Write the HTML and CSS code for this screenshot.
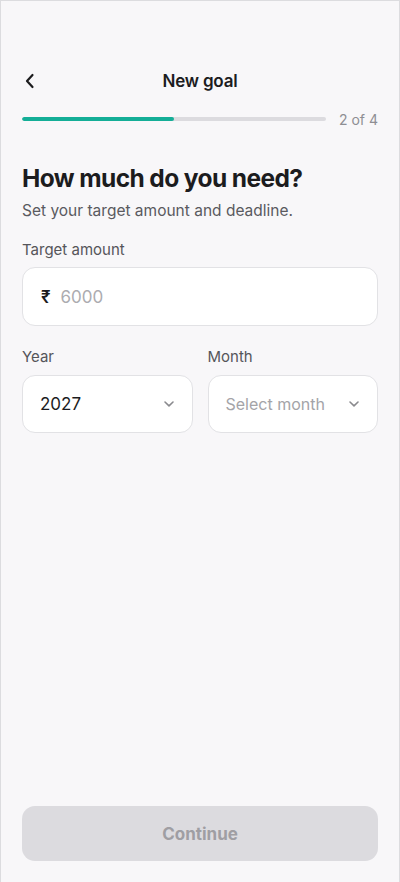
FILE: index.html
```html
<!DOCTYPE html>
<html lang="en">
<head>
<meta charset="utf-8">
<title>New goal</title>
<link rel="stylesheet" href="styles.css">
</head>
<body>
<div class="screen">
  <header class="header">
    <button class="back" aria-label="Back">
      <svg width="12" height="16" viewBox="0 0 12 16"><path d="M8.5 2 L3 8 L8.5 14" fill="none" stroke="#1c1c1e" stroke-width="2.2" stroke-linecap="round" stroke-linejoin="round"/></svg>
    </button>
    <h1 class="title">New goal</h1>
  </header>
  <div class="progress-row">
    <div class="track"><div class="fill" style="width:50%"></div></div>
    <span class="step">2 of 4</span>
  </div>
  <h2 class="heading">How much do you need?</h2>
  <p class="sub">Set your target amount and deadline.</p>
  <label class="label lbl-amount">Target amount</label>
  <div class="field amount">
    <span class="currency">₹</span>
    <span class="placeholder">6000</span>
  </div>
  <div class="row">
    <div class="col">
      <label class="label">Year</label>
      <div class="field select">
        <span class="value">2027</span>
        <svg class="chev" width="12" height="8" viewBox="0 0 12 8"><path d="M2 2 L6 5.8 L10 2" fill="none" stroke="#8a8a8e" stroke-width="1.6" stroke-linecap="round" stroke-linejoin="round"/></svg>
      </div>
    </div>
    <div class="col">
      <label class="label">Month</label>
      <div class="field select">
        <span class="placeholder">Select month</span>
        <svg class="chev" width="12" height="8" viewBox="0 0 12 8"><path d="M2 2 L6 5.8 L10 2" fill="none" stroke="#8a8a8e" stroke-width="1.6" stroke-linecap="round" stroke-linejoin="round"/></svg>
      </div>
    </div>
  </div>
  <button class="continue" disabled>Continue</button>
</div>
</body>
</html>
```
FILE: styles.css
```css
* { box-sizing: border-box; }
html, body { margin: 0; padding: 0; }
body {
  font-family: Inter, "Noto Sans", "Liberation Sans", sans-serif;
  background: #f8f7f9;
  color: #1c1c1e;
}
.screen {
  width: 400px;
  height: 882px;
  border: 1px solid #dcdcdf;
  border-bottom: none;
  display: flex;
  flex-direction: column;
  padding: 0 21px;
}
.header {
  position: relative;
  height: 44px;
  margin-top: 58px;
  display: flex;
  align-items: center;
  justify-content: center;
}
.back {
  position: absolute;
  left: 2px;
  top: 50%;
  transform: translateY(-50%);
  background: none;
  border: none;
  padding: 0;
  display: flex;
  cursor: pointer;
}
.title {
  margin: 0;
  font-size: 17px;
  font-weight: 600;
  letter-spacing: -0.2px;
}
.progress-row {
  display: flex;
  align-items: center;
  gap: 13px;
  margin-top: 6px;
  height: 20px;
}
.track {
  flex: 1;
  height: 4px;
  border-radius: 2px;
  background: #dcdbdf;
  overflow: hidden;
}
.fill {
  height: 100%;
  background: #14ae97;
  border-radius: 2px;
}
.step {
  font-size: 14px;
  color: #8e8e93;
  white-space: nowrap;
}
.heading {
  margin: 34px 0 0;
  font-size: 24.5px;
  line-height: 30px;
  font-weight: 700;
  letter-spacing: -0.6px;
}
.sub {
  margin: 8px 0 0;
  font-size: 15.5px;
  line-height: 20px;
  color: #5a5a5f;
}
.label {
  display: block;
  font-size: 15px;
  line-height: 20px;
  color: #55555a;
  font-weight: 400;
  margin-bottom: 7px;
}
.lbl-amount { margin-top: 19px; }
.field {
  background: #fff;
  border: 1px solid #e2e2e5;
  border-radius: 13px;
  display: flex;
  align-items: center;
}
.amount {
  height: 59px;
  padding: 0 18px;
  gap: 10px;
}
.currency {
  font-size: 17px;
  font-weight: 600;
  color: #1c1c1e;
}
.placeholder {
  font-size: 17px;
  color: #acacb0;
}
.row {
  display: flex;
  gap: 15px;
  margin-top: 21px;
}
.col { flex: 1; }
.col .label { margin-bottom: 8px; }
.select {
  height: 58px;
  padding: 0 17px 0 17px;
  justify-content: space-between;
}
.value {
  font-size: 17px;
  color: #1c1c1e;
}
.select .placeholder { color: #a4a4a8; font-size: 16px; }
.chev { flex: none; }
.continue {
  margin-top: auto;
  margin-bottom: 21px;
  height: 55px;
  border: none;
  border-radius: 13px;
  background: #dcdbdf;
  color: #9f9ea3;
  font-family: inherit;
  font-size: 17px;
  font-weight: 700;
}
```
